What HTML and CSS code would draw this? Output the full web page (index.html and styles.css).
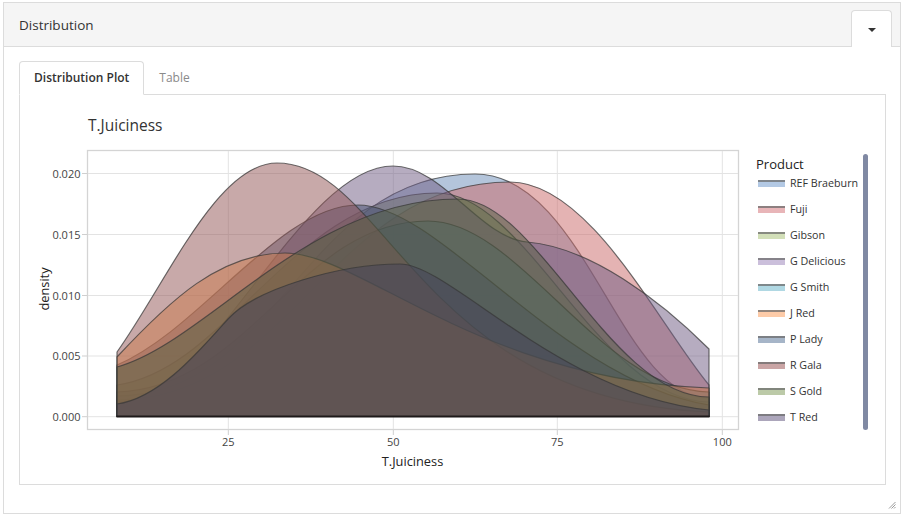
FILE: index.html
```html
<!DOCTYPE html>
<html>
<head>
<meta charset="utf-8">
<title>Distribution</title>
<link rel="stylesheet" href="styles.css">
</head>
<body>
<div class="panel">
  <div class="panel-head">
    <span class="head-title">Distribution</span>
    <div class="head-tab"><span class="caret"></span></div>
  </div>
  <div class="panel-body">
    <div class="tabs">
      <div class="tab active">Distribution Plot</div>
      <div class="tab">Table</div>
    </div>
    <div class="tab-content">
      <svg class="chart" width="725" height="389" viewBox="20 95 725 389" xmlns="http://www.w3.org/2000/svg">
        <text class="plot-title" x="88" y="131">T.Juiciness</text>
        <rect x="87.5" y="150.5" width="651" height="279" fill="#fff" stroke="#d4d4d4" stroke-width="1.3"/>
        <g stroke="#e3e3e3" stroke-width="1">
          <line x1="228.3" y1="151" x2="228.3" y2="429"/>
          <line x1="393.3" y1="151" x2="393.3" y2="429"/>
          <line x1="557.3" y1="151" x2="557.3" y2="429"/>
          <line x1="722.3" y1="151" x2="722.3" y2="429"/>
          <line x1="88" y1="173.5" x2="738" y2="173.5"/>
          <line x1="88" y1="234.5" x2="738" y2="234.5"/>
          <line x1="88" y1="295.5" x2="738" y2="295.5"/>
          <line x1="88" y1="356" x2="738" y2="356"/>
          <line x1="88" y1="416.7" x2="738" y2="416.7"/>
        </g>
        <g stroke="#cfcfcf" stroke-width="1">
          <line x1="82" y1="173.5" x2="87" y2="173.5"/>
          <line x1="82" y1="234.5" x2="87" y2="234.5"/>
          <line x1="82" y1="295.5" x2="87" y2="295.5"/>
          <line x1="82" y1="356" x2="87" y2="356"/>
          <line x1="82" y1="416.7" x2="87" y2="416.7"/>
          <line x1="228.3" y1="430" x2="228.3" y2="435"/>
          <line x1="393.3" y1="430" x2="393.3" y2="435"/>
          <line x1="557.3" y1="430" x2="557.3" y2="435"/>
          <line x1="722.3" y1="430" x2="722.3" y2="435"/>
        </g>
        <g class="tick" text-anchor="end">
          <text x="80.5" y="177.5">0.020</text>
          <text x="80.5" y="238.5">0.015</text>
          <text x="80.5" y="299.5">0.010</text>
          <text x="80.5" y="360">0.005</text>
          <text x="80.5" y="420.5">0.000</text>
        </g>
        <g class="tick" text-anchor="middle">
          <text x="228.3" y="446">25</text>
          <text x="393.3" y="446">50</text>
          <text x="557.3" y="446">75</text>
          <text x="722.3" y="446">100</text>
        </g>
        <text class="axis-title" x="412.5" y="465.5" text-anchor="middle">T.Juiciness</text>
        <text class="axis-title" x="0" y="0" text-anchor="middle" transform="translate(48.5 289) rotate(-90)">density</text>
        <g class="dens" fill-opacity="0.5" stroke="rgba(55,55,55,0.72)" stroke-width="1.2" stroke-linejoin="round">
          <path fill="#6a8cb8" d="M117,416.5 L117,396 C277,396 305,174 475,174 C585,174 620,398 709,398 L709,416.5 Z"/>
          <path fill="#c96868" d="M117,416.5 L117,400 C290,400 330,182 510,182 C590,182 659,325 709,385 L709,416.5 Z"/>
          <path fill="#76855a" d="M117,416.5 L117,385 C227,370 297,193 437,193 C527,193 599,400 709,402 L709,416.5 Z"/>
          <path fill="#6e5a82" d="M117,416.5 L117,402 C210,400 300,166 393,166 C443,166 480,238 527,242 C590,247 660,300 709,349 L709,416.5 Z"/>
          <path fill="#4b6d75" d="M117,416.5 L117,392 C250,388 300,221 428,221 C520,221 600,390 709,392 L709,416.5 Z"/>
          <path fill="#434e70" d="M117,416.5 L117,365 C200,330 280,205 358,205 C440,205 560,380 709,405 L709,416.5 Z"/>
          <path fill="#915353" d="M117,416.5 L117,352 C167,282 217,163 277,163 C387,163 420,400 709,412 L709,416.5 Z"/>
          <path fill="#ca794b" d="M117,416.5 L117,357 C170,300 220,253 285,253 C360,253 480,380 709,388 L709,416.5 Z"/>
          <path fill="#555f41" d="M117,416.5 L117,367 C207,342 308,199 458,199 C538,199 609,396 709,397 L709,416.5 Z"/>
          <path fill="#46445a" d="M117,416.5 L117,404 C160,398 200,350 228,319 C255,289 340,264 400,264 C450,264 560,395 709,410 L709,416.5 Z"/>
        </g>
        <line x1="116.5" y1="416.5" x2="709.5" y2="416.5" stroke="#1e1a1a" stroke-width="2"/>
      </svg>
      <div class="legend-wrap">
        <div class="legend">
          <div class="legend-title">Product</div>
          <div class="legend-items">
            <div class="item"><span class="sw sw-ref"></span>REF Braeburn</div>
            <div class="item"><span class="sw sw-fuji"></span>Fuji</div>
            <div class="item"><span class="sw sw-gibson"></span>Gibson</div>
            <div class="item"><span class="sw sw-gdel"></span>G Delicious</div>
            <div class="item"><span class="sw sw-gsmith"></span>G Smith</div>
            <div class="item"><span class="sw sw-jred"></span>J Red</div>
            <div class="item"><span class="sw sw-plady"></span>P Lady</div>
            <div class="item"><span class="sw sw-rgala"></span>R Gala</div>
            <div class="item"><span class="sw sw-sgold"></span>S Gold</div>
            <div class="item"><span class="sw sw-tred"></span>T Red</div>
          </div>
        </div>
        <div class="scrollbar"></div>
      </div>
    </div>
  </div>
  <svg class="resize" width="8" height="8" viewBox="0 0 8 8" xmlns="http://www.w3.org/2000/svg">
    <g stroke="#9a9a9a" stroke-width="1">
      <line x1="7.5" y1="1" x2="1" y2="7.5"/>
      <line x1="7.5" y1="3.5" x2="3.5" y2="7.5"/>
      <line x1="7.5" y1="6" x2="6" y2="7.5"/>
    </g>
  </svg>
</div>
</body>
</html>
```

FILE: styles.css
```css
html, body {
  margin: 0;
  padding: 0;
  background: #fff;
}
body {
  font-family: "Open Sans", "Liberation Sans", sans-serif;
  color: #333;
}
.panel {
  position: relative;
  box-sizing: border-box;
  width: 898px;
  height: 512px;
  margin: 2px 0 0 3px;
  border: 1px solid #dcdcdc;
  background: #fff;
}
.panel-head {
  height: 43px;
  background: #f5f5f5;
  border-bottom: 1px solid #dcdcdc;
  display: flex;
  justify-content: space-between;
  align-items: center;
  padding: 0 8px 0 15px;
}
.head-title {
  font-size: 13.5px;
  color: #333;
}
.head-tab {
  align-self: flex-end;
  box-sizing: border-box;
  width: 41px;
  height: 37px;
  margin-bottom: -1px;
  background: #fff;
  border: 1px solid #dcdcdc;
  border-bottom: none;
  border-radius: 4px 4px 0 0;
  display: flex;
  align-items: center;
  justify-content: center;
}
.caret {
  width: 0;
  height: 0;
  border-top: 4px solid #333;
  border-left: 4px solid transparent;
  border-right: 4px solid transparent;
  margin-top: 1px;
}
.panel-body {
  padding: 14px 14px 0 15px;
}
.tabs {
  display: flex;
  height: 33px;
  border-bottom: 1px solid #dcdcdc;
}
.tab {
  box-sizing: border-box;
  height: 34px;
  padding: 6px 14px;
  line-height: 20px;
  font-size: 12px;
  color: #8a8a8a;
  border: 1px solid transparent;
  border-radius: 4px 4px 0 0;
}
.tab.active {
  color: #333;
  font-weight: 600;
  background: #fff;
  border-color: #dcdcdc;
  border-bottom-color: transparent;
  margin-bottom: -1px;
}
.tab-content {
  display: flex;
  height: 389px;
  border: 1px solid #dcdcdc;
  border-top: none;
}
.chart {
  display: block;
  flex: none;
}
.plot-title {
  font-family: "Open Sans", "Liberation Sans", sans-serif;
  font-size: 15.5px;
  fill: #333;
}
.tick text {
  font-family: "Open Sans", "Liberation Sans", sans-serif;
  font-size: 11px;
  fill: #444;
}
.axis-title {
  font-family: "Open Sans", "Liberation Sans", sans-serif;
  font-size: 12.8px;
  fill: #222;
}
.legend-wrap {
  display: flex;
  padding-top: 59px;
  width: 140px;
}
.legend {
  box-sizing: border-box;
  width: 118px;
  padding: 3px 0 0 11px;
}
.legend-title {
  font-size: 13px;
  line-height: 14px;
  color: #222;
}
.legend-items {
  margin-top: -1px;
}
.item {
  display: flex;
  align-items: center;
  height: 26px;
  font-size: 10.7px;
  color: #333;
  white-space: nowrap;
}
.sw {
  box-sizing: border-box;
  width: 27px;
  height: 7px;
  margin: 0 5px 0 2px;
  border-top: 2px solid rgba(110, 110, 110, 0.75);
}
.sw-ref { background: #b3c9e4; }
.sw-fuji { background: #e8b5b8; }
.sw-gibson { background: #d2dfb8; }
.sw-gdel { background: #cbbfdb; }
.sw-gsmith { background: #b0d8e3; }
.sw-jred { background: #fdcba8; }
.sw-plady { background: #a6b5c8; }
.sw-rgala { background: #caa5a5; }
.sw-sgold { background: #bccaa8; }
.sw-tred { background: #aca6bb; }
.scrollbar {
  width: 5px;
  height: 276px;
  border-radius: 3px;
  background: #8089a3;
}
.resize {
  position: absolute;
  right: 4px;
  bottom: 4px;
}
```
